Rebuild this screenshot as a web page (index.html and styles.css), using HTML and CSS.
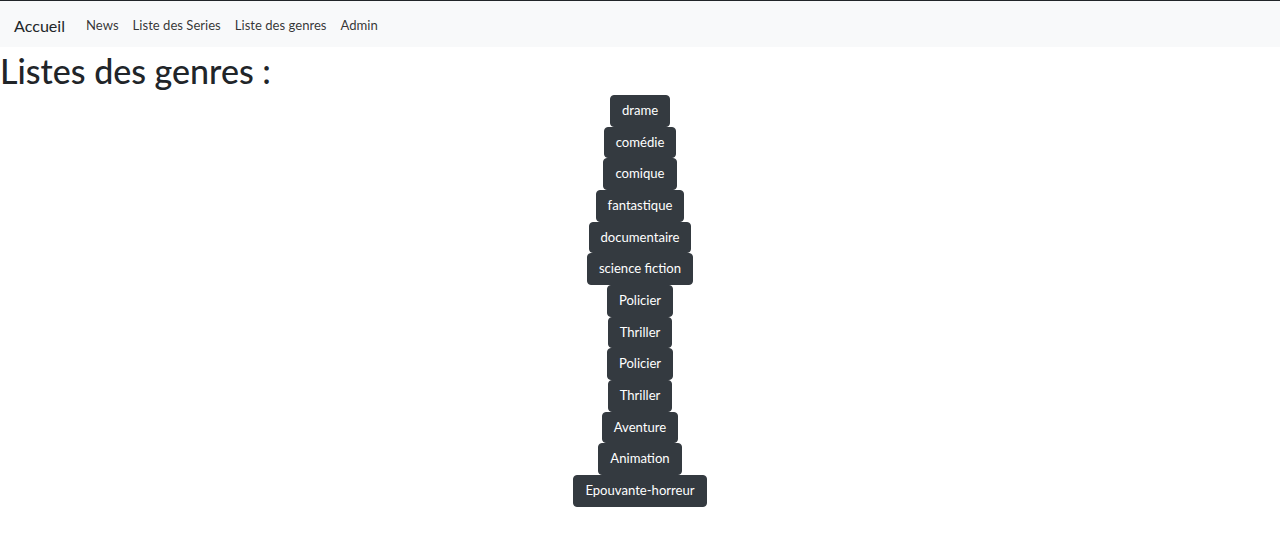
FILE: index.html
```html
<!DOCTYPE html>
<html lang="fr">
<head>
<meta charset="utf-8">
<title>Listes des genres</title>
<link rel="stylesheet" href="styles.css">
</head>
<body>
<nav class="navbar">
  <a class="brand" href="#">Accueil</a>
  <ul class="nav">
    <li><a href="#">News</a></li>
    <li><a href="#">Liste des Series</a></li>
    <li><a href="#">Liste des genres</a></li>
    <li><a href="#">Admin</a></li>
  </ul>
</nav>
<h1 class="title">Listes des genres :</h1>
<div class="genres">
  <button class="btn">drame</button>
  <button class="btn">comédie</button>
  <button class="btn">comique</button>
  <button class="btn">fantastique</button>
  <button class="btn">documentaire</button>
  <button class="btn">science fiction</button>
  <button class="btn">Policier</button>
  <button class="btn">Thriller</button>
  <button class="btn">Policier</button>
  <button class="btn">Thriller</button>
  <button class="btn">Aventure</button>
  <button class="btn">Animation</button>
  <button class="btn">Epouvante-horreur</button>
</div>
</body>
</html>
```
FILE: styles.css
```css
html, body {
  margin: 0;
  padding: 0;
}
body {
  font-family: Lato, "Noto Sans", sans-serif;
  color: #212529;
  background: #fff;
  border-top: 1px solid #212529;
}
.navbar {
  box-sizing: border-box;
  display: flex;
  align-items: center;
  height: 46px;
  padding: 2px 14px 0;
  background: #f8f9fa;
}
.brand {
  font-size: 16.1px;
  color: #212529;
  text-decoration: none;
  margin-right: 14px;
}
.nav {
  display: flex;
  list-style: none;
  margin: 0;
  padding: 0;
}
.nav a {
  display: block;
  padding: 0 7px;
  font-size: 13.1px;
  color: rgba(0,0,0,.8);
  text-decoration: none;
}
.title {
  margin: 0;
  font-size: 34px;
  font-weight: 500;
  line-height: 48px;
}
.genres {
  display: flex;
  flex-direction: column;
  align-items: center;
}
.btn {
  font-family: inherit;
  font-size: 13.1px;
  line-height: 21.67px;
  padding: 4px 11px;
  border: 1px solid #343a40;
  border-radius: 4px;
  background: #343a40;
  color: #fff;
}
```
